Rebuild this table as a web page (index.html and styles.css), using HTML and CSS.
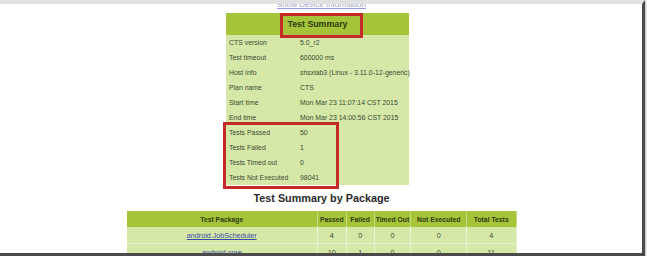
FILE: index.html
```html
<!DOCTYPE html>
<html>
<head>
<meta charset="utf-8">
<link rel="stylesheet" href="styles.css">
</head>
<body>
<div class="shot">
  <div class="page">
    <a class="devlink" href="#">Show Device Information</a>
    <table class="summary">
      <colgroup><col class="col-lbl"><col class="col-val"></colgroup>
      <tr><th colspan="2">Test Summary</th></tr>
      <tr><td>CTS version</td><td>5.0_r2</td></tr>
      <tr><td>Test timeout</td><td>600000 ms</td></tr>
      <tr><td>Host Info</td><td>shsxlab3 (Linux - 3.11.0-12-generic)</td></tr>
      <tr><td>Plan name</td><td>CTS</td></tr>
      <tr><td>Start time</td><td>Mon Mar 23 11:07:14 CST 2015</td></tr>
      <tr><td>End time</td><td>Mon Mar 23 14:00:56 CST 2015</td></tr>
      <tr><td>Tests Passed</td><td>50</td></tr>
      <tr><td>Tests Failed</td><td>1</td></tr>
      <tr><td>Tests Timed out</td><td>0</td></tr>
      <tr><td>Tests Not Executed</td><td>98041</td></tr>
    </table>
    <h2 class="pkg-title">Test Summary by Package</h2>
    <table class="pkg">
      <tr>
        <th class="c-name">Test Package</th>
        <th class="c-pass">Passed</th>
        <th class="c-fail">Failed</th>
        <th class="c-to">Timed Out</th>
        <th class="c-ne">Not Executed</th>
        <th class="c-tot">Total Tests</th>
      </tr>
      <tr>
        <td><a href="#">android.JobScheduler</a></td>
        <td>4</td><td>0</td><td>0</td><td>0</td><td>4</td>
      </tr>
      <tr>
        <td><a href="#">android.core</a></td>
        <td>10</td><td>1</td><td>0</td><td>0</td><td>11</td>
      </tr>
    </table>
  </div>
  <div class="mark mark-head"></div>
  <div class="mark mark-counts"></div>
</div>
</body>
</html>
```
FILE: styles.css
```css
html, body {
  margin: 0;
  padding: 0;
  background: #fbfbfb;
}
body {
  font-family: "Liberation Sans", Arial, sans-serif;
  width: 647px;
  height: 256px;
  overflow: hidden;
}
.shot {
  position: relative;
  width: 642px;
  height: 249px;
  background: #ffffff;
  border-top: 4px solid #e1e1e1;
  border-right: 3px solid #4a4a4a;
  border-bottom: 3px solid #4a4a4a;
  box-shadow: 1px 1px 2px rgba(0,0,0,0.25);
  overflow: hidden;
}
.page {
  display: flex;
  flex-direction: column;
  align-items: center;
  padding-left: 1px;
}
.devlink {
  font-size: 8px;
  line-height: 8px;
  margin-top: -3px;
  color: #5a5ab0;
  opacity: 0.6;
}
table {
  border-collapse: collapse;
  color: #333;
}
.summary {
  margin-top: 4px;
  margin-right: 8px;
  width: 183px;
  table-layout: fixed;
  background: #d5e8a8;
  font-size: 6.9px;
}
.col-lbl { width: 71px; }
.col-val { width: 112px; }
.summary th {
  background: #a5c43a;
  height: 22px;
  padding: 0;
  font-size: 8.8px;
  font-weight: bold;
  color: #2d3a10;
  text-align: center;
}
.summary td {
  height: 15px;
  padding: 0 0 0 3px;
  white-space: nowrap;
  color: #3b4a30;
}
.pkg-title {
  margin: 6px 0 0 0;
  font-size: 10.8px;
  line-height: 14px;
  font-weight: bold;
  color: #2b2b2b;
}
.pkg {
  margin-top: 6px;
  width: 390px;
  background: #d5e8a8;
  font-size: 7.2px;
}
.pkg th {
  background: #a5c43a;
  height: 16px;
  padding: 0;
  font-size: 6.8px;
  font-weight: bold;
  color: #2d3a10;
  border-right: 1px solid #c4dc82;
  text-align: center;
  white-space: nowrap;
}
.pkg td {
  height: 16px;
  padding: 0;
  text-align: center;
  border-right: 1px solid #e8f2d2;
  border-bottom: 1px solid #e8f2d2;
  color: #3b4a30;
}
.pkg a {
  color: #3a4aa8;
}
.c-name { width: 195px; }
.c-pass { width: 28px; }
.c-fail { width: 27px; }
.c-to { width: 36px; }
.c-ne { width: 55px; }
.c-tot { width: 49px; }
.mark {
  position: absolute;
  border: 3px solid #c42a28;
  box-sizing: border-box;
}
.mark-head {
  left: 280px;
  top: 9px;
  width: 83px;
  height: 25px;
}
.mark-counts {
  left: 223px;
  top: 118px;
  width: 116px;
  height: 67px;
}
```
